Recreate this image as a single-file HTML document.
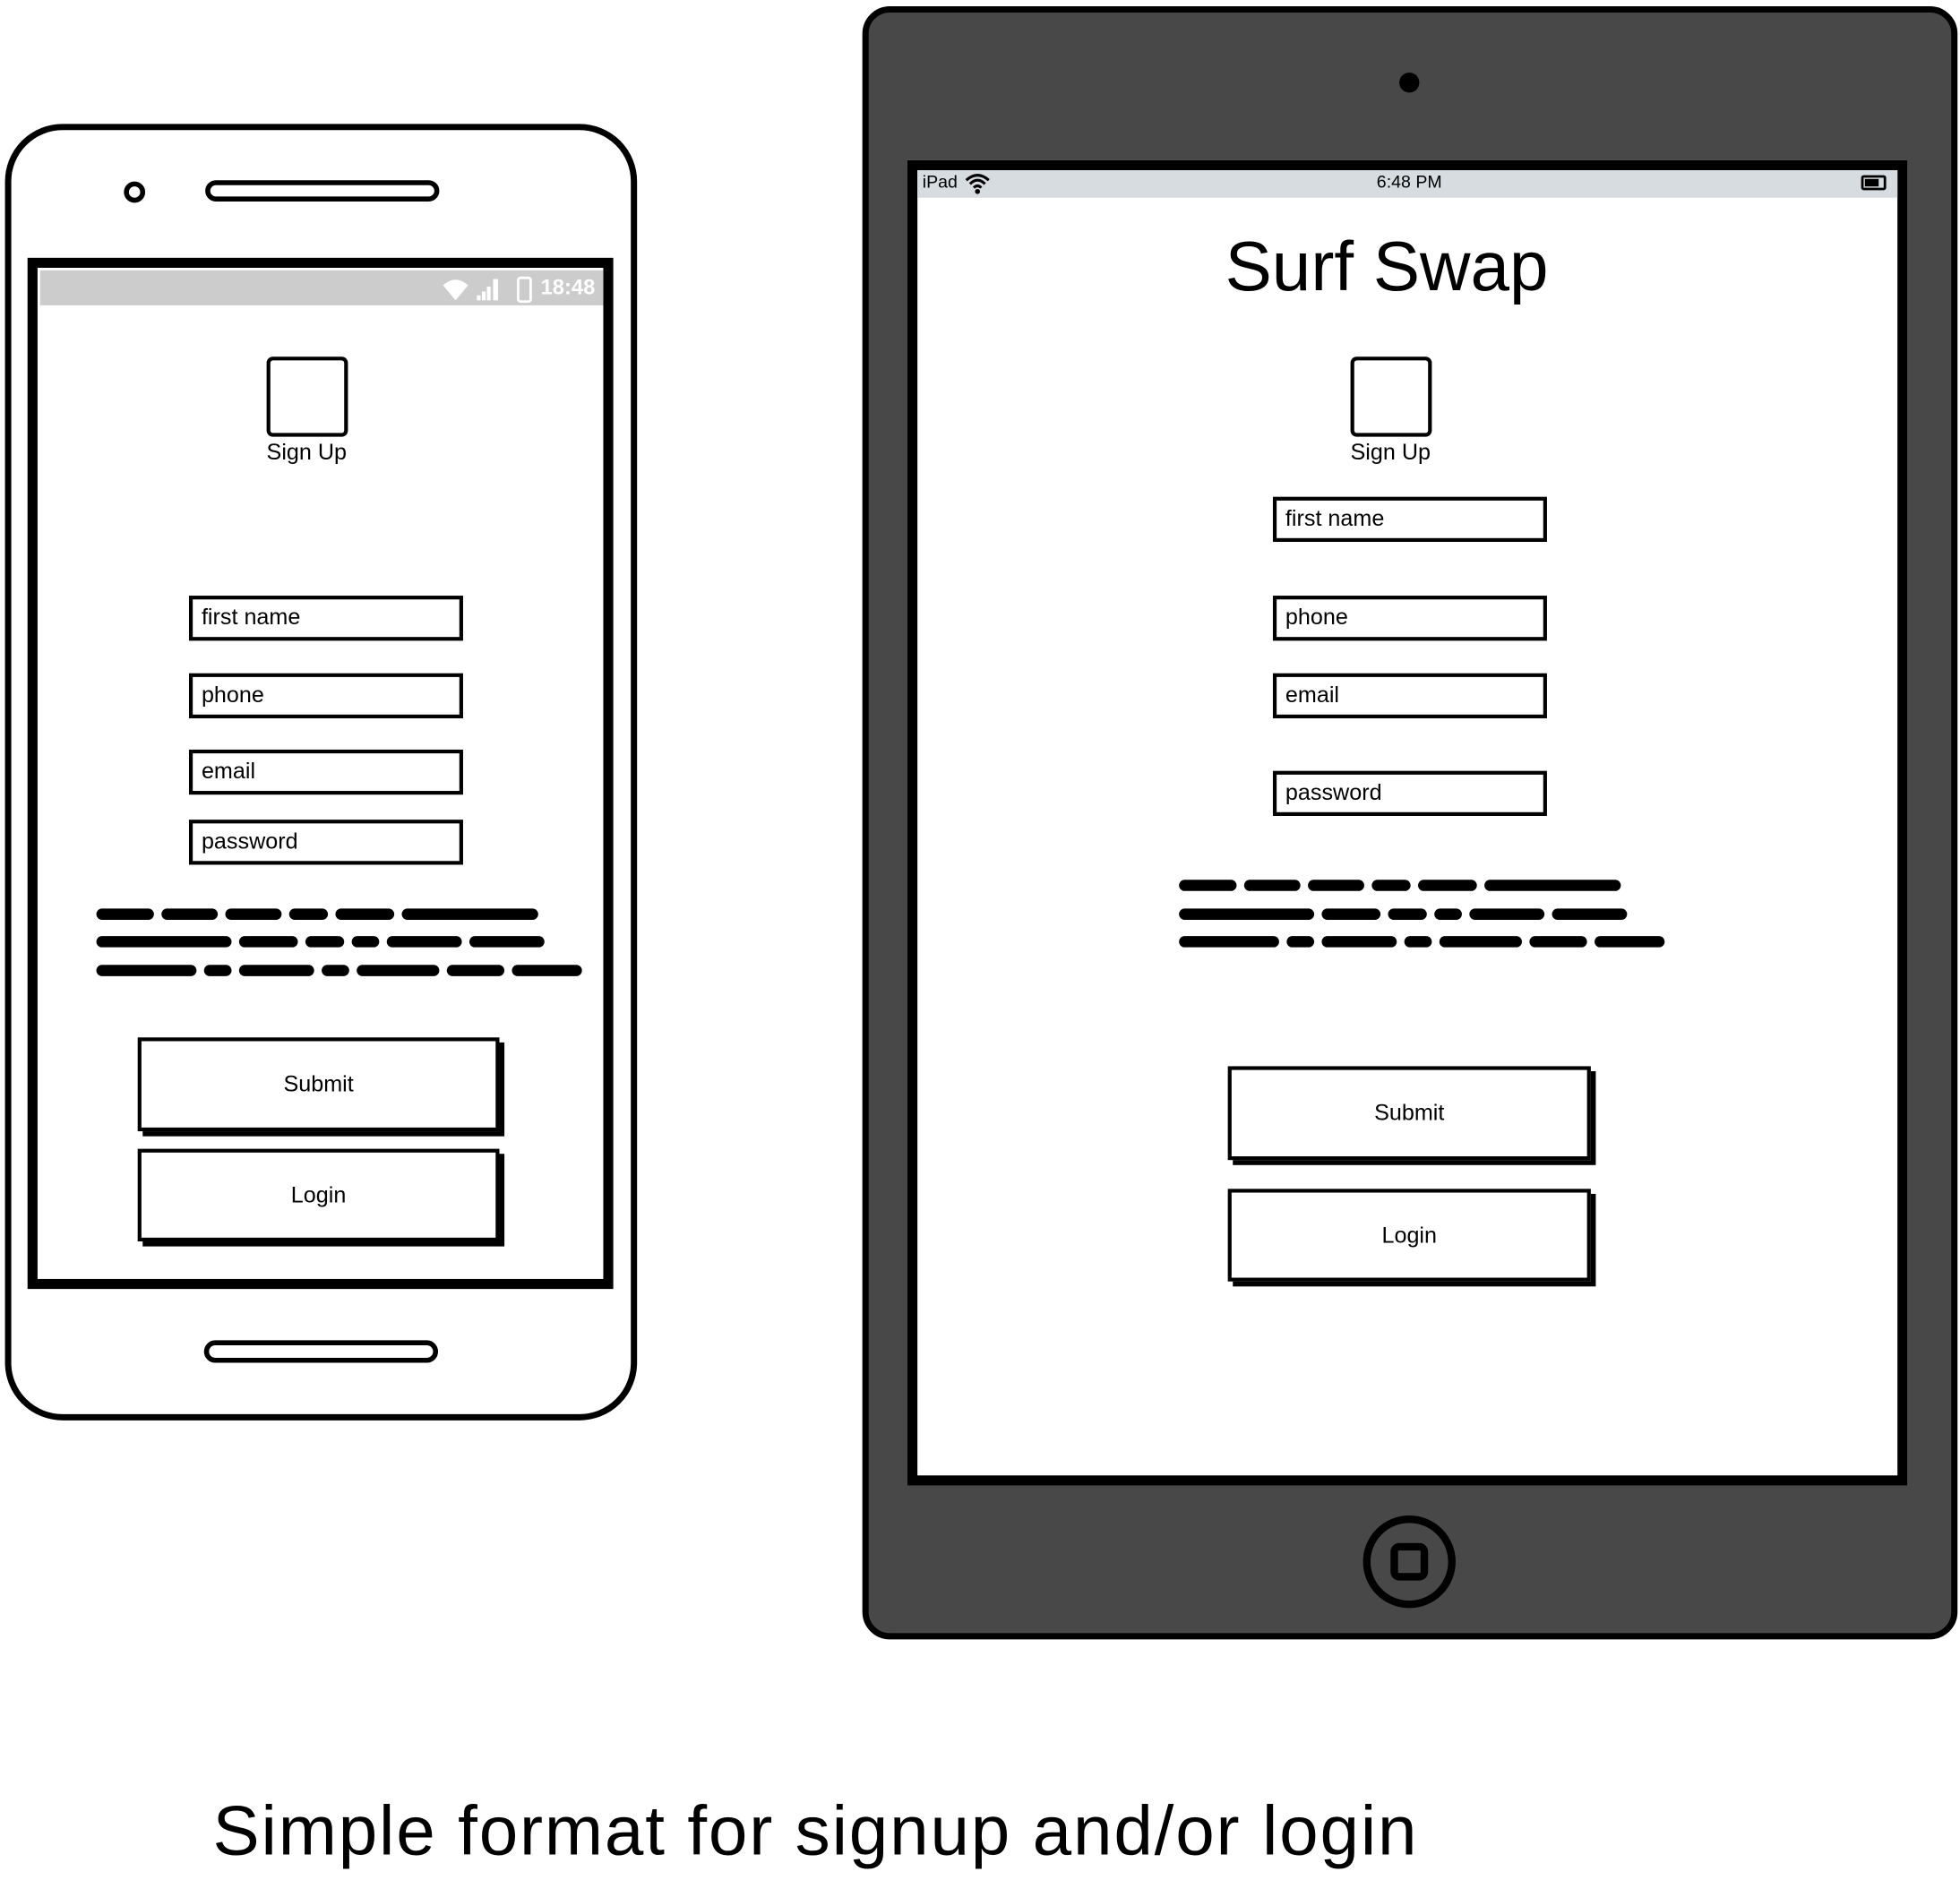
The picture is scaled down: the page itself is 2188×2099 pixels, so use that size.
<!DOCTYPE html>
<html><head><meta charset="utf-8"><style>
html,body{margin:0;padding:0;background:#fff;}
body{width:2188px;height:2098px;overflow:hidden;position:relative;font-family:"Liberation Sans",sans-serif;}
#w{position:absolute;left:0;top:0;width:1566px;height:1502px;transform:scale(1.3972);transform-origin:0 0;}
.a{position:absolute;box-sizing:border-box;}
.inp{position:absolute;box-sizing:border-box;border:3px solid #000;background:#fff;font-size:18px;line-height:28px;padding-left:7px;color:#000;}
.btn{position:absolute;box-sizing:border-box;border:3px solid #000;background:#fff;box-shadow:4px 4px 0 #000;font-size:18px;text-align:center;}
.sl{position:absolute;display:flex;gap:6px;height:9px;}
.sl span{display:block;height:9px;background:#000;border-radius:5px;}
.lbl{position:absolute;font-size:18px;text-align:center;width:120px;}
</style></head><body><div id="w">

<!-- PHONE -->
<div class="a" style="left:4px;top:99px;width:505px;height:1036px;border:5px solid #000;border-radius:46px;background:#fff;"></div>
<div class="a" style="left:99px;top:145px;width:17px;height:17px;border:4px solid #000;border-radius:50%;"></div>
<div class="a" style="left:164px;top:144px;width:187px;height:17px;border:4px solid #000;border-radius:10px;"></div>
<div class="a" style="left:163px;top:1071px;width:187px;height:18px;border:4px solid #000;border-radius:10px;"></div>
<div class="a" style="left:22px;top:206px;width:468px;height:824px;border:8px solid #000;background:#fff;"></div>
<div class="a" style="left:32px;top:216px;width:450px;height:28px;background:#ccc;"></div>
<div class="a" style="left:432px;top:220px;color:#fff;font-size:17px;font-weight:bold;">18:48</div>
<svg class="a" style="left:352px;top:220px" width="80" height="22" viewBox="0 0 80 22">
<path d="M2 8 Q12 -1 22 8 L12 20 Z" fill="#fff"/>
<rect x="29" y="16" width="3" height="4" fill="#fff"/><rect x="33" y="13" width="3" height="7" fill="#fff"/><rect x="37" y="9" width="3" height="11" fill="#fff"/><rect x="42" y="3" width="4" height="17" fill="#fff"/>
<rect x="62" y="2" width="10" height="19" rx="2" fill="none" stroke="#fff" stroke-width="2"/>
</svg>
<div class="a" style="left:213px;top:285px;width:65px;height:64px;border:3px solid #000;border-radius:5px;"></div>
<div class="lbl" style="left:185px;top:351px;">Sign Up</div>
<div class="inp" style="left:151px;top:476px;width:219px;height:36px;">first name</div>
<div class="inp" style="left:151px;top:538px;width:219px;height:36px;">phone</div>
<div class="inp" style="left:151px;top:599px;width:219px;height:36px;">email</div>
<div class="inp" style="left:151px;top:655px;width:219px;height:36px;">password</div>
<div class="sl" style="left:77px;top:726px;"><span style="width:46px"></span><span style="width:45px"></span><span style="width:45px"></span><span style="width:31px"></span><span style="width:47px"></span><span style="width:109px"></span></div>
<div class="sl" style="left:77px;top:748px;"><span style="width:108px"></span><span style="width:47px"></span><span style="width:31px"></span><span style="width:22px"></span><span style="width:60px"></span><span style="width:60px"></span></div>
<div class="sl" style="left:77px;top:771px;"><span style="width:80px"></span><span style="width:22px"></span><span style="width:60px"></span><span style="width:22px"></span><span style="width:66px"></span><span style="width:46px"></span><span style="width:56px"></span></div>
<div class="btn" style="left:110px;top:829px;width:289px;height:75px;line-height:69px;">Submit</div>
<div class="btn" style="left:110px;top:918px;width:289px;height:74px;line-height:68px;">Login</div>

<!-- IPAD -->
<div class="a" style="left:689px;top:5px;width:875px;height:1305px;border:5px solid #000;border-radius:22px;background:#484848;"></div>
<div class="a" style="left:1118px;top:58px;width:16px;height:16px;border-radius:50%;background:#000;"></div>
<div class="a" style="left:725px;top:128px;width:799px;height:1059px;border:8px solid #000;background:#fff;"></div>
<div class="a" style="left:733px;top:136px;width:783px;height:22px;background:#d6dcdf;"></div>
<div class="a" style="left:737px;top:137px;font-size:14px;">iPad</div>
<svg class="a" style="left:771px;top:138px" width="20" height="18" viewBox="0 0 20 18"><path d="M1 6 Q10 -2 19 6 M4 9 Q10 3 16 9 M7 12 Q10 9 13 12" stroke="#000" stroke-width="2.2" fill="none"/><circle cx="10" cy="15" r="2" fill="#000"/></svg>
<div class="a" style="left:1076px;top:137px;width:100px;text-align:center;font-size:14px;">6:48 PM</div>
<div class="a" style="left:1487px;top:140px;width:20px;height:12px;border:2px solid #000;border-radius:2px;"><div style="margin:1px;width:11px;height:6px;background:#000"></div></div>
<div class="a" style="left:908px;top:180px;width:400px;text-align:center;font-size:56px;">Surf Swap</div>
<div class="a" style="left:1079px;top:285px;width:65px;height:64px;border:3px solid #000;border-radius:5px;"></div>
<div class="lbl" style="left:1051px;top:351px;">Sign Up</div>
<div class="inp" style="left:1017px;top:397px;width:219px;height:36px;">first name</div>
<div class="inp" style="left:1017px;top:476px;width:219px;height:36px;">phone</div>
<div class="inp" style="left:1017px;top:538px;width:219px;height:36px;">email</div>
<div class="inp" style="left:1017px;top:616px;width:219px;height:36px;">password</div>
<div class="sl" style="left:942px;top:703px;"><span style="width:46px"></span><span style="width:45px"></span><span style="width:45px"></span><span style="width:31px"></span><span style="width:47px"></span><span style="width:109px"></span></div>
<div class="sl" style="left:942px;top:726px;"><span style="width:108px"></span><span style="width:47px"></span><span style="width:31px"></span><span style="width:22px"></span><span style="width:60px"></span><span style="width:60px"></span></div>
<div class="sl" style="left:942px;top:748px;"><span style="width:80px"></span><span style="width:22px"></span><span style="width:60px"></span><span style="width:22px"></span><span style="width:66px"></span><span style="width:46px"></span><span style="width:56px"></span></div>
<div class="btn" style="left:981px;top:852px;width:290px;height:75px;line-height:69px;">Submit</div>
<div class="btn" style="left:981px;top:950px;width:290px;height:74px;line-height:68px;">Login</div>
<div class="a" style="left:1089px;top:1211px;width:74px;height:74px;border:6px solid #000;border-radius:50%;"></div>
<div class="a" style="left:1111px;top:1233px;width:30px;height:30px;border:6px solid #000;border-radius:7px;"></div>

<div class="a" style="left:170px;top:1430px;font-size:56px;letter-spacing:1.3px;white-space:nowrap;">Simple format for signup and/or login</div>
</div></body></html>
